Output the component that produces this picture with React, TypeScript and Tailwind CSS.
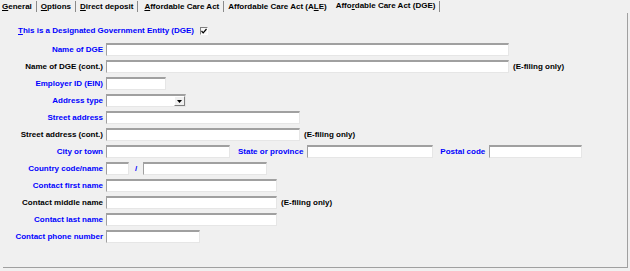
import React from "react";

const blue = "text-[#0000ff]";

function Field({ w, select }: { w: number; select?: boolean }) {
  return (
    <div
      className="relative h-[13px] shrink-0 bg-white border-t-2 border-l border-r border-b border-t-[#a0a0a0] border-l-[#a0a0a0] border-r-[#e6e6e6] border-b-[#e6e6e6]"
      style={{ width: w }}
    >
      {select && (
        <div className="absolute right-0 top-0 flex h-[10px] w-[11px] items-center justify-center border border-t-white border-l-white border-r-[#808080] border-b-[#808080] bg-[#f0f0f0]">
          <svg width="5" height="3" viewBox="0 0 5 3">
            <path d="M0 0H5L2.5 3Z" fill="#000" />
          </svg>
        </div>
      )}
    </div>
  );
}

function Row({
  label,
  req,
  children,
}: {
  label: string;
  req?: boolean;
  children: React.ReactNode;
}) {
  return (
    <div className="flex h-[13px] items-center">
      <div
        className={`w-[100px] shrink-0 whitespace-nowrap text-right ${req ? blue : "text-black"}`}
      >
        {label}
      </div>
      <div className="ml-[3px] flex items-center">{children}</div>
    </div>
  );
}

const Note = () => <span className="ml-[4px] whitespace-nowrap text-black">(E-filing only)</span>;

function Sep() {
  return <div className="mx-[4px] h-[11px] w-px bg-[#8a8a8a]" />;
}

export default function App() {
  return (
    <div
      className="h-[271px] w-[630px] overflow-hidden bg-[#f0f0f0] text-[8px] font-bold leading-none text-black"
      style={{ fontFamily: '"Liberation Sans", Arial, sans-serif' }}
    >
      <div className="flex h-[13px] items-center pl-[2px] whitespace-nowrap">
        <span>
          <u>G</u>eneral
        </span>
        <Sep />
        <span>
          <u>O</u>ptions
        </span>
        <Sep />
        <span>
          <u>D</u>irect deposit
        </span>
        <Sep />
        <span className="ml-[2px]">
          <u>A</u>ffordable Care Act
        </span>
        <Sep />
        <span>
          Affordable Care Act (A<u>L</u>E)
        </span>
        <span className="ml-[9px] -mt-[2px]">
          Affo<u>r</u>dable Care Act (DGE)
        </span>
        <Sep />
      </div>

      <div className="ml-[3px] h-[255px] w-[625px] border-r border-b border-[#a0a0a0] pt-[11px]">
        <div className={`flex h-[13px] items-center pl-[15px] ${blue}`}>
          <span>
            <u>T</u>his is a Designated Government Entity (DGE)
          </span>
          <div className="ml-[6px] flex h-[8px] w-[8px] items-center justify-center border border-t-[#808080] border-l-[#808080] border-r-white border-b-white bg-[#f8f8f8]">
            <svg width="6" height="6" viewBox="0 0 6 6">
              <path d="M0.5 3L2.2 4.8L5.5 1" stroke="#000" strokeWidth="1.2" fill="none" />
            </svg>
          </div>
        </div>

        <div className="mt-[6px] flex flex-col gap-[4px]">
          <Row label="Name of DGE" req>
            <Field w={403} />
          </Row>
          <Row label="Name of DGE (cont.)">
            <Field w={403} />
            <Note />
          </Row>
          <Row label="Employer ID (EIN)" req>
            <Field w={60} />
          </Row>
          <Row label="Address type" req>
            <Field w={80} select />
          </Row>
          <Row label="Street address" req>
            <Field w={194} />
          </Row>
          <Row label="Street address (cont.)">
            <Field w={194} />
            <Note />
          </Row>
          <Row label="City or town" req>
            <Field w={124} />
            <span className={`ml-[8px] whitespace-nowrap ${blue}`}>State or province</span>
            <div className="ml-[4px]">
              <Field w={126} />
            </div>
            <span className={`ml-[7px] whitespace-nowrap ${blue}`}>Postal code</span>
            <div className="ml-[4px]">
              <Field w={93} />
            </div>
          </Row>
          <Row label="Country code/name" req>
            <Field w={23} />
            <span className={`mx-[6px] ${blue}`}>/</span>
            <Field w={124} />
          </Row>
          <Row label="Contact first name" req>
            <Field w={171} />
          </Row>
          <Row label="Contact middle name">
            <Field w={171} />
            <Note />
          </Row>
          <Row label="Contact last name" req>
            <Field w={171} />
          </Row>
          <Row label="Contact phone number" req>
            <Field w={94} />
          </Row>
        </div>
      </div>
    </div>
  );
}
